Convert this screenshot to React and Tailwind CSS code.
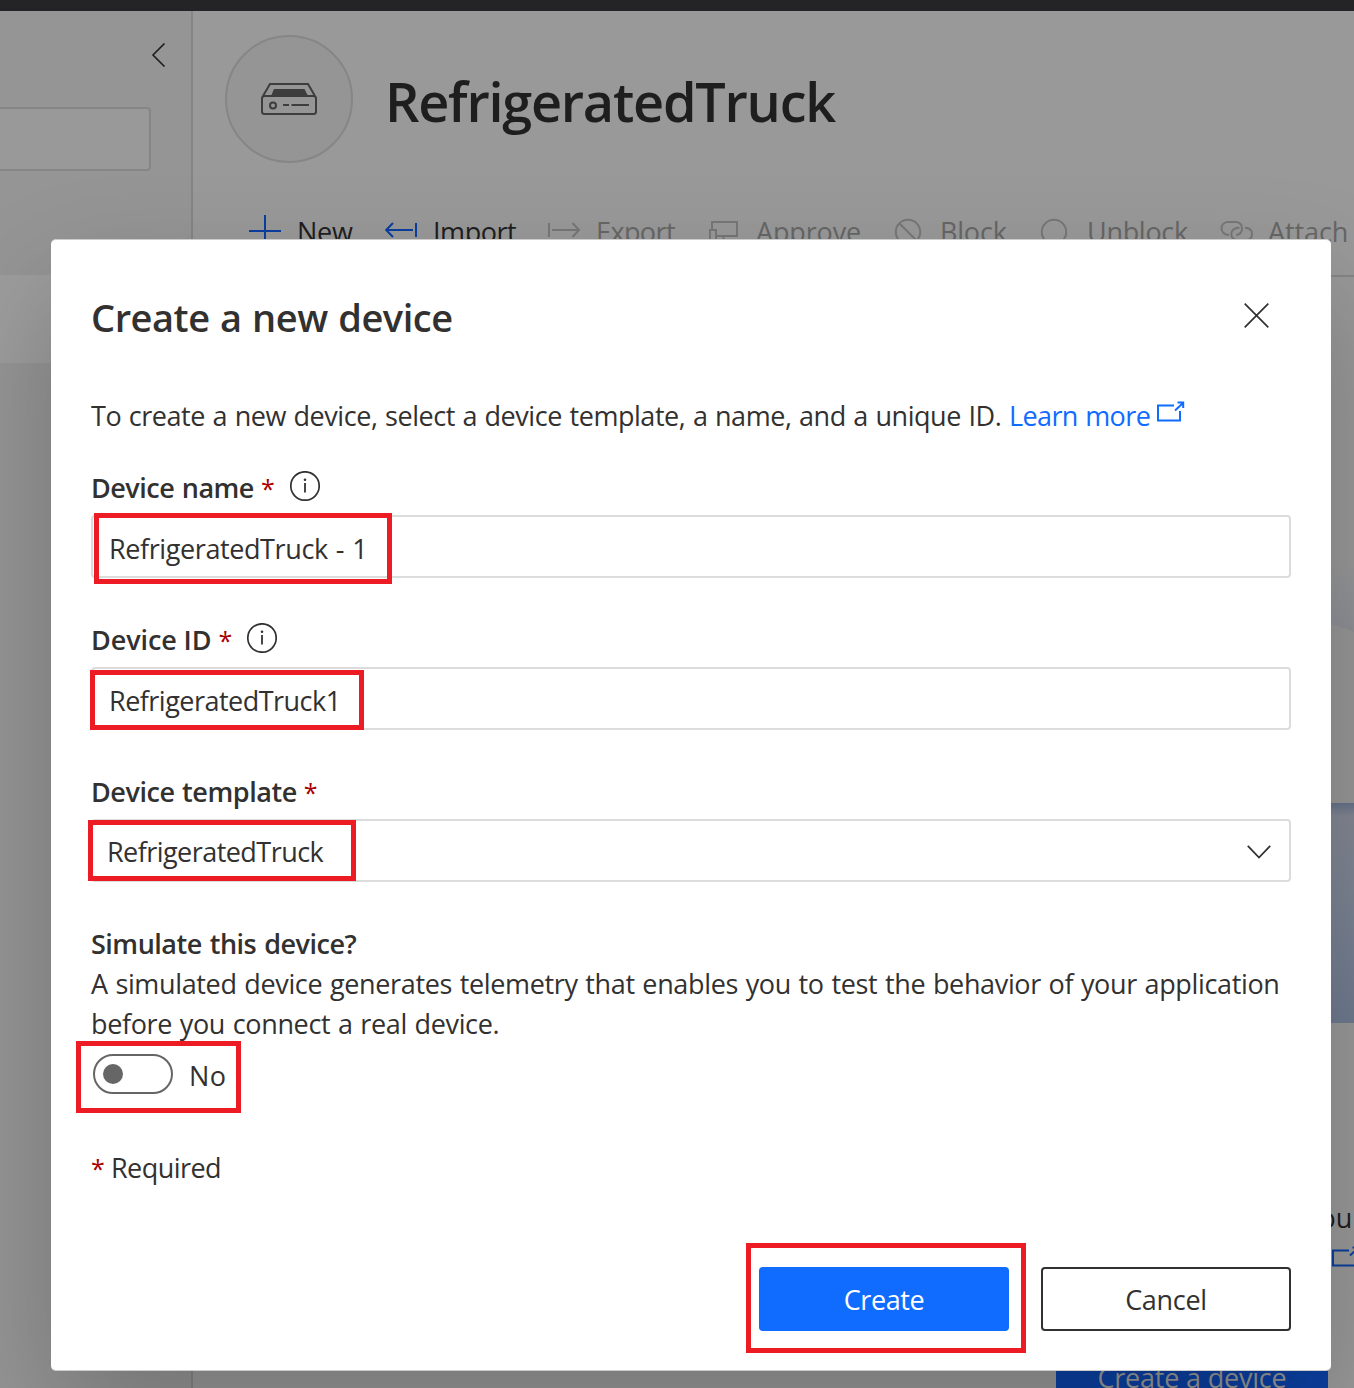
import React from 'react';

const stroke = { fill: 'none', stroke: 'currentColor', strokeWidth: 2 };

const PlusIcon = () => (
  <svg width="32" height="32" viewBox="0 0 32 32" {...stroke}><path d="M0 16H32M16 0V32" /></svg>
);
const ImportIcon = () => (
  <svg width="32" height="32" viewBox="0 0 32 32" {...stroke}><path d="M1 15H28M8 8L1.2 15L8 22M31 8V22" /></svg>
);
const ExportIcon = () => (
  <svg width="32" height="32" viewBox="0 0 32 32" {...stroke}><path d="M4 15H31M24.500 8L31.200 15L24.500 22M1 8V22" /></svg>
);
const ApproveIcon = () => (
  <svg width="32" height="32" viewBox="0 0 32 32" {...stroke}><path d="M4 14V7H29V21H9M2 30V15H8V30M15.500 22V28" /></svg>
);
const BlockIcon = () => (
  <svg width="32" height="32" viewBox="0 0 32 32" {...stroke}><circle cx="16" cy="17" r="12.200" /><path d="M7.500 8.500L24.500 25.500" /></svg>
);
const UnblockIcon = () => (
  <svg width="32" height="32" viewBox="0 0 32 32" {...stroke}><circle cx="15" cy="17" r="12.200" /></svg>
);
const AttachIcon = () => (
  <svg width="34" height="32" viewBox="0 0 34 32" {...stroke}>
    <path d="M9 20C4.500 20 1.500 17 1.500 13.500S4 7 8.500 7H15.500C19.500 7 22 9.500 22 13.500S19.500 19.500 16 20" />
    <path d="M19.500 12.800H18.500C14 12.800 11.200 15.800 11.200 19S13.500 25 18 25H26C30 25 32 22.500 32 19S29.500 13 25 12.800" />
  </svg>
);
const ExternalIcon = () => (
  <svg width="28" height="21" viewBox="0 0 28 21" {...stroke}>
    <path d="M17 4.500H1V19.500H23V10" />
    <path d="M18 9.500L26 2M20.500 1.500H26.200V7" />
  </svg>
);
const InfoIcon = () => (
  <svg width="30" height="30" viewBox="0 0 30 30" className="relative -top-[2px] text-[#323130]" {...stroke}>
    <circle cx="15" cy="15" r="14.200" strokeWidth="1.700" />
    <path d="M15 12V21.500" strokeWidth="1.800" />
    <circle cx="15" cy="8.800" r="1.300" fill="currentColor" stroke="none" />
  </svg>
);

const tools = [
  { label: 'New', Icon: PlusIcon, box: 'w-[136px]', tone: 'text-[#1e1e1e]', icon: 'text-[#0b3f9e]', track: 'tracking-[-0.3px]' },
  { label: 'Import', Icon: ImportIcon, box: 'w-[163px]', tone: 'text-[#1e1e1e]', icon: 'text-[#0b3f9e]', track: 'tracking-[-0.45px]' },
  { label: 'Export', Icon: ExportIcon, box: 'w-[160px]', tone: 'text-[#666666]', icon: 'text-[#777777]', track: 'tracking-[-0.6px]' },
  { label: 'Approve', Icon: ApproveIcon, box: 'w-[184px]', tone: 'text-[#666666]', icon: 'text-[#777777]', track: 'tracking-[-0.15px]' },
  { label: 'Block', Icon: BlockIcon, box: 'w-[147px]', tone: 'text-[#666666]', icon: 'text-[#777777]', track: 'tracking-[-0.2px]' },
  { label: 'Unblock', Icon: UnblockIcon, box: 'w-[181px]', tone: 'text-[#666666]', icon: 'text-[#777777]', track: 'tracking-[-0.3px]' },
  { label: 'Attach', Icon: AttachIcon, box: 'w-[140px]', tone: 'text-[#666666]', icon: 'text-[#777777]', track: 'tracking-[-0.1px]' },
];

function Sidebar() {
  return (
    <aside className="flex w-[193px] shrink-0 flex-col border-r-2 border-[#858585] bg-[#959595]">
      <div className="flex h-[96px] justify-end pt-8 pr-[25px]">
        <svg width="15" height="24" viewBox="0 0 15 24" fill="none" stroke="#1e1e1e" strokeWidth="1.600"><path d="M13.500 0.500L2 12L13.500 23.500" /></svg>
      </div>
      <div className="-ml-2 h-16 w-[159px] rounded-[4px] border-2 border-[#868686] bg-[#999999]" />
      <div className="mt-[104px] h-[88px] bg-[#9d9d9d]" />
    </aside>
  );
}

function PageHeader() {
  return (
    <header className="flex h-[179px] items-start pt-6 pl-8">
      <div className="flex size-32 items-center justify-center rounded-full border-2 border-[#868686] bg-[#959595]">
        <svg width="56" height="32" viewBox="0 0 56 32" fill="none" stroke="#3d3d3d" strokeWidth="2">
          <path d="M2 13L9 1H47L54 13" />
          <rect x="1" y="13" width="54" height="18" rx="2.500" />
          <path d="M10 13L13 6H43.500L47 13Z" fill="#3d3d3d" stroke="none" />
          <circle cx="12" cy="22.500" r="3" />
          <path d="M22 22H28M30.500 22H48" />
        </svg>
      </div>
      <h1 className="mt-7 ml-8 text-[54px] leading-[76px] font-semibold tracking-[-1.25px] text-[#1e1e1e]">RefrigeratedTruck</h1>
    </header>
  );
}

function Toolbar() {
  return (
    <div className="flex h-[87px] w-[1161px] items-start overflow-hidden border-b-2 border-[#868686] pt-[22px] pl-14">
      {tools.map(({ label, Icon, box, tone, icon, track }) => (
        <div key={label} className={`flex h-10 shrink-0 items-center gap-4 ${box} ${tone}`}>
          <span className={`relative -top-px w-8 shrink-0 ${icon}`}><Icon /></span>
          <span className={track}>{label}</span>
        </div>
      ))}
    </div>
  );
}

function EmptyState() {
  return (
    <div className="flex w-[1161px] flex-col items-end">
      <svg className="mt-[283px]" width="60" height="463" viewBox="0 0 60 463">
        <defs>
          <linearGradient id="haze" x1="0" y1="0" x2="0" y2="1"><stop offset="0" stopColor="#999999" /><stop offset="1" stopColor="#8e9097" /></linearGradient>
          <linearGradient id="sea" x1="0" y1="0" x2="0" y2="1">
            <stop offset="0" stopColor="#66728a" /><stop offset="0.060" stopColor="#848893" /><stop offset="0.500" stopColor="#7b8494" /><stop offset="1" stopColor="#707b90" />
          </linearGradient>
        </defs>
        <rect width="60" height="72" fill="url(#haze)" />
        <path d="M0 64C26 62 44 64 60 72V243H0Z" fill="#969796" />
        <rect y="243" width="60" height="220" fill="url(#sea)" />
      </svg>
      <div className="mt-[175px] pr-[2px] leading-10 tracking-[-0.2px] text-[#1e1e1e]">you</div>
      <div className="mt-[8px] -mr-[6px] flex h-[21px] text-[#0b3f9e]"><ExternalIcon /></div>
      <div className="mt-[79px] mr-[26px] flex h-16 w-[272px] items-center justify-center bg-[#0b40a3] tracking-[-0.2px] text-[#999999]">Create a device</div>
    </div>
  );
}

function Field({ label, track, info, value, valueTrack, pad, select }) {
  return (
    <div className="mb-[41px]">
      <div className="relative top-px flex h-10 items-center">
        <span className={`font-semibold ${track}`}>{label}</span>
        <span className="ml-[7px] w-3 text-[25px] text-[#a80000]">*</span>
        {info && <span className="ml-[17px]"><InfoIcon /></span>}
      </div>
      <div className={`mt-2 flex h-[63px] items-center justify-between rounded-[4px] border-2 border-[#dcdcdc] ${pad}`}>
        <span className={valueTrack}>{value}</span>
        {select && (
          <svg width="24" height="14" viewBox="0 0 24 14" fill="none" stroke="#323130" strokeWidth="1.800"><path d="M0.800 0.800L12 12.500L23.200 0.800" /></svg>
        )}
      </div>
    </div>
  );
}

function Dialog() {
  return (
    <div className="absolute top-[239px] left-[51px] h-[1132px] w-[1280px] rounded-[5px] border-y border-[#cccccc] bg-white px-10 pt-[51px] text-[#323130] shadow-[0_51px_115px_rgba(0,0,0,0.22)]">
      <div className="flex h-[52px] justify-between pr-[21px]">
        <h2 className="text-[38px] leading-[52px] font-semibold tracking-[-0.45px] [word-spacing:1px]">Create a new device</h2>
        <svg className="mt-[12px] mr-px" width="25" height="25" viewBox="0 0 25 25" fill="none" stroke="#323130" strokeWidth="1.700"><path d="M0.700 0.700L24.300 24.300M24.300 0.700L0.700 24.300" /></svg>
      </div>
      <p className="mt-[53px] mb-[31px] flex h-10 items-center whitespace-pre">
        <span className="tracking-[-0.45px] [word-spacing:1px]">To create a new device, select a device template, a name, and a unique ID. </span>
        <span className="tracking-[-0.6px] text-[#0f6cff] [word-spacing:1px]">Learn more</span>
        <span className="relative -top-[5px] ml-[7px] text-[#0f6cff]"><ExternalIcon /></span>
      </p>
      <Field label="Device name" track="tracking-[-0.5px] [word-spacing:1px]" info value="RefrigeratedTruck - 1" valueTrack="tracking-[-0.4px] [word-spacing:1.5px]" pad="pl-4 pt-1" />
      <Field label="Device ID" track="tracking-[-0.1px]" info value="RefrigeratedTruck1" valueTrack="tracking-[-0.52px]" pad="pl-4 pt-1" />
      <Field label="Device template" track="tracking-[-0.45px] [word-spacing:1px]" value="RefrigeratedTruck" valueTrack="tracking-[-0.55px]" pad="pl-[14px] pr-[18px] pt-0.5" select />
      <div className="relative top-px font-semibold tracking-[-0.5px] [word-spacing:1.5px]">Simulate this device?</div>
      <p className="relative top-px whitespace-nowrap tracking-[-0.35px] [word-spacing:1px]">
        A simulated device generates telemetry that enables you to test the behavior of your application<br />before you connect a real device.
      </p>
      <div className="mt-[11px] flex h-10 items-center">
        <div className="ml-[2px] flex h-10 w-20 items-center rounded-full border-2 border-[#666666] pl-2"><div className="size-5 rounded-full bg-[#666666]" /></div>
        <span className="relative top-[2px] ml-4 tracking-[0.3px]">No</span>
      </div>
      <div className="mt-[54px] mb-[79px] flex h-10">
        <span className="w-5 text-[25px] text-[#a80000]">*</span>
        <span className="tracking-[-0.55px]">Required</span>
      </div>
      <div className="flex justify-end gap-8">
        <button className="h-16 w-[250px] rounded-[4px] bg-[#0f6cff] pt-px tracking-[-0.4px] text-white">Create</button>
        <button className="h-16 w-[250px] rounded-[4px] border-2 border-[#323130] pt-px tracking-[-0.3px]">Cancel</button>
      </div>
      <div className="absolute top-[273px] left-[43px] h-[71px] w-[298px] border-5 border-[#ed1c24]" />
      <div className="absolute top-[430px] left-[39px] h-[60px] w-[274px] border-5 border-[#ed1c24]" />
      <div className="absolute top-[580px] left-[37px] h-[61px] w-[268px] border-5 border-[#ed1c24]" />
      <div className="absolute top-[801px] left-[25px] h-[72px] w-[165px] border-5 border-[#ed1c24]" />
      <div className="absolute top-[1003px] left-[695px] h-[110px] w-[280px] border-5 border-[#ed1c24]" />
    </div>
  );
}

export default function App() {
  return (
    <div className="relative flex h-[1388px] w-[1354px] flex-col overflow-hidden bg-[#999999] font-['Open_Sans',sans-serif] text-[27px] leading-10">
      <div className="h-[11px] shrink-0 bg-[#242426]" />
      <div className="flex min-h-0 flex-1">
        <Sidebar />
        <main className="min-w-0 flex-1">
          <PageHeader />
          <Toolbar />
          <EmptyState />
        </main>
      </div>
      <Dialog />
    </div>
  );
}
